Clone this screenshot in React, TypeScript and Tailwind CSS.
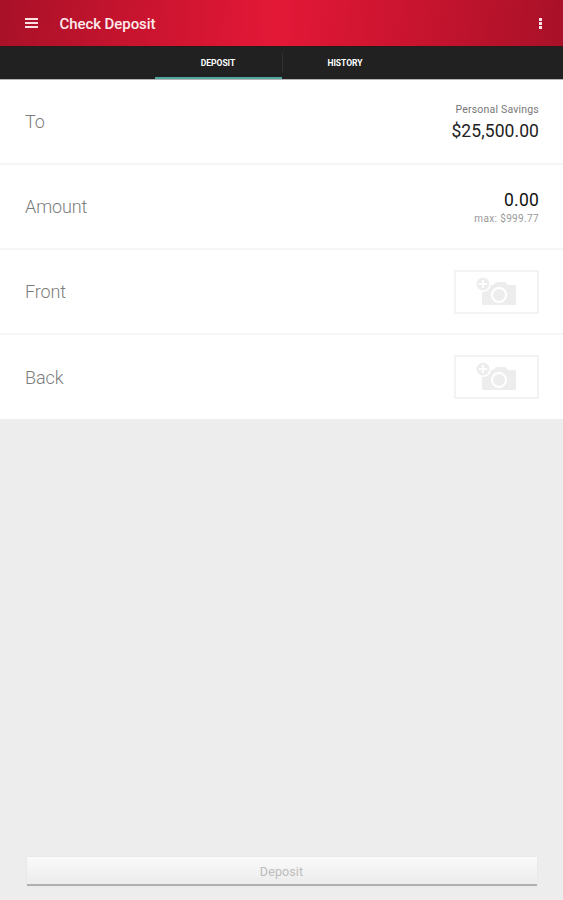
import React from 'react';

const CameraIcon: React.FC = () => (
  <svg className="w-10 h-8 -ml-[2px] mt-[2px]" viewBox="0 0 40 32" fill="none">
    <path d="M7 8H17L20 5H29L32 8H39Q40 8 40 9V27Q40 28 39 28H7Q6 28 6 27V8Z" fill="#ededed" />
    <circle cx="23" cy="18" r="7" stroke="#fff" strokeWidth="2" />
    <circle cx="7" cy="7" r="8" fill="#fff" />
    <circle cx="7" cy="7" r="6.5" fill="#ededed" />
    <path d="M7 3V11M3 7H11" stroke="#fff" strokeWidth="1.8" />
  </svg>
);

const PhotoButton: React.FC<{ label: string }> = ({ label }) => (
  <button
    aria-label={label}
    className="w-[85px] h-[44px] border-2 border-[#f3f3f3] flex items-center justify-center"
  >
    <CameraIcon />
  </button>
);

interface RowProps {
  label: string;
  last?: boolean;
  children: React.ReactNode;
}

const Row: React.FC<RowProps> = ({ label, last, children }) => (
  <div
    className={`pl-[25px] pr-[24px] flex items-center justify-between bg-white ${
      last ? 'h-[84px]' : 'h-[85px] border-b-2 border-[#f5f5f5]'
    }`}
  >
    <span className="text-[18px] leading-6 font-light tracking-[-0.1px] text-[#7c7c7c] pt-px">{label}</span>
    {children}
  </div>
);

export default function App() {
  return (
    <div className="w-full h-[900px] flex flex-col bg-[#ededed] font-['Roboto',sans-serif] overflow-hidden">
      <header className="h-[46px] shrink-0 pl-[25px] pr-[20px] flex items-center bg-[linear-gradient(95deg,#a81128_0%,#c9142f_25%,#e31837_49%,#c9142f_73%,#a81128_100%)]">
        <svg className="w-[13px] h-[12px]" viewBox="0 0 13 12" fill="#fbe0e4">
          <path d="M0 1H13V3H0ZM0 5H13V7H0ZM0 9H13V11H0Z" />
        </svg>
        <h1 className="ml-[21.5px] pt-px text-[15px] leading-5 font-medium tracking-[-0.07px] text-[#fdebed]">Check Deposit</h1>
        <svg className="ml-auto w-[5px] h-[13px]" viewBox="0 0 5 13" fill="#fbe4e7">
          <path d="M1 1H4V4H1ZM1 5H4V8H1ZM1 9H4V12H1Z" />
        </svg>
      </header>

      <nav className="h-[33px] shrink-0 flex justify-center bg-[#212121] border-t border-[#2b1a1c] text-[8.5px] font-bold text-white">
        <button className="w-[127px] pt-[2px] border-b-2 border-[#4fa79f]">DEPOSIT</button>
        <div className="w-px my-[6px] bg-[#303030] -mr-px" />
        <button className="w-[127px] pt-[2px] border-b-2 border-transparent">HISTORY</button>
      </nav>

      <main className="border-t border-[#b5b5b5]">
        <Row label="To">
          <div className="text-right pt-[2px]">
            <div className="text-[10.5px] leading-[16px] tracking-[0.2px] text-[#777]">Personal Savings</div>
            <div className="text-[17.5px] leading-[26px] tracking-[0.08px] text-[#222]">$25,500.00</div>
          </div>
        </Row>
        <Row label="Amount">
          <div className="text-right pt-[2px]">
            <div className="text-[17.5px] leading-[22px] tracking-[0.2px] text-[#111]">0.00</div>
            <div className="text-[10px] leading-[15px] tracking-[0.35px] text-[#999]">max: $999.77</div>
          </div>
        </Row>
        <Row label="Front">
          <PhotoButton label="Front" />
        </Row>
        <Row label="Back" last>
          <PhotoButton label="Back" />
        </Row>
      </main>

      <button className="mt-auto mb-[14px] mx-[26.5px] h-[29px] shrink-0 pt-[4px] bg-linear-to-b from-[#fafafa] to-[#ececec] border-b-2 border-[#b0b0b0] text-[12.5px] tracking-[0.1px] text-[#bcbcbc] shadow-[0_0_2px_#e0e0e0]">
        Deposit
      </button>
    </div>
  );
}
